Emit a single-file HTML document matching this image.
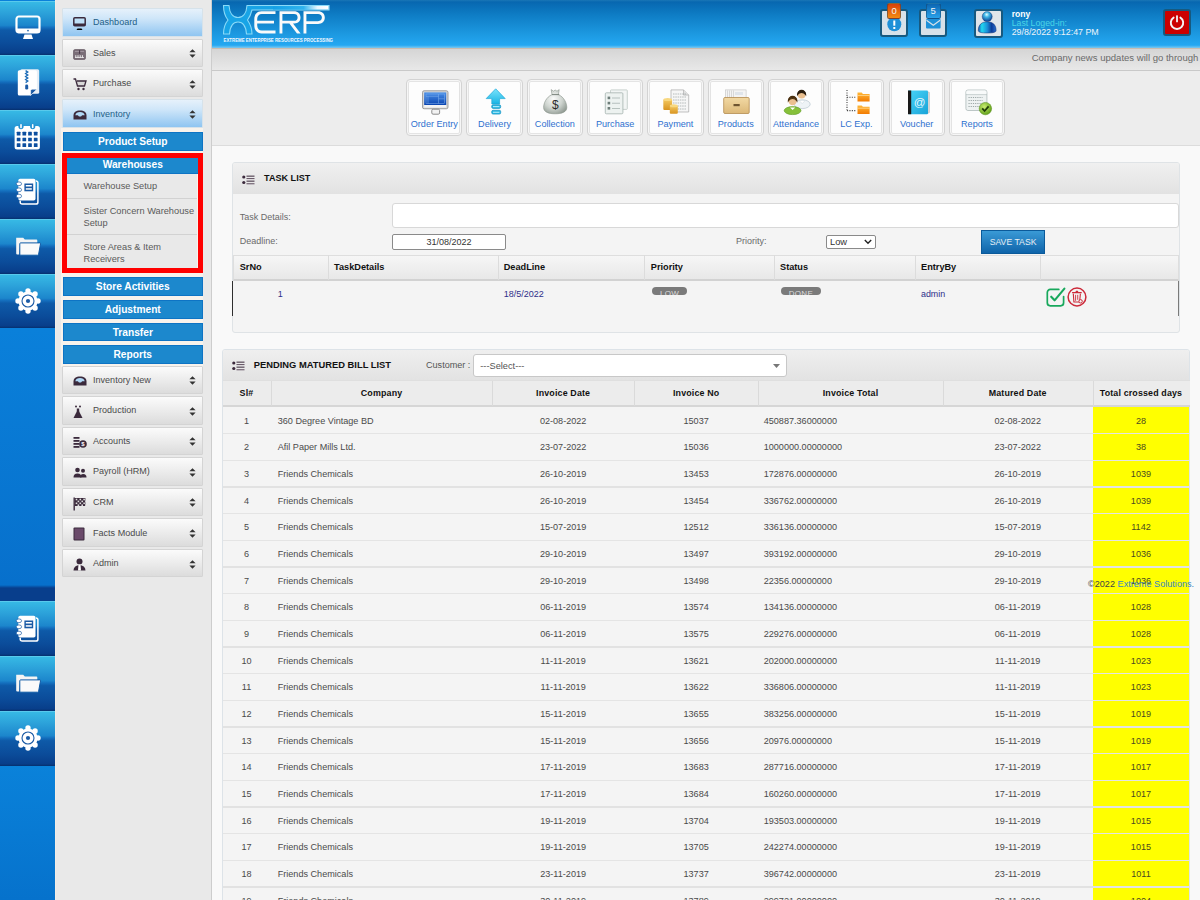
<!DOCTYPE html><html><head><meta charset="utf-8"><title>XERP</title><style>
*{box-sizing:border-box;margin:0;padding:0}
html,body{width:1200px;height:900px;overflow:hidden;background:#f9f9f9;font-family:"Liberation Sans",sans-serif;color:#555}
.a{position:absolute}
.a>svg{display:block}
.tile{position:absolute;left:0;width:55px;background:linear-gradient(to bottom,#6ad2f0 0,#36b8e4 1.5px,#2ca2da 22%,#1c86cc 45%,#146fbe 49%,#0e5aa8 54%,#0b4c9a 78%,#083e8a 96%,#06306e 100%)}
.tile svg{position:absolute}
.mi{position:absolute;left:62px;width:141px;height:28.5px;border:1px solid #d4d4d4;border-radius:1px;background:linear-gradient(to bottom,#fbfbfb 0,#f2f2f2 30%,#dcdcdc 100%);}
.mi.sel{background:linear-gradient(to bottom,#e6f1fb 0,#cfe6f9 35%,#8fc5f1 100%);border-color:#d6e2ea}
.mi .lb{position:absolute;left:30px;top:8.3px;font-size:9.05px;color:#4a4a4a;white-space:nowrap}
.mi.sel .lb{color:#1f5f88}
.mi .ic{position:absolute;left:10px;top:1.5px;height:26.5px;display:flex;align-items:center}
.mi .ar{position:absolute;left:126.3px;top:9.7px;display:block}
.mi .ar svg,.mi .ic svg{display:block}
.bb{position:absolute;left:62.5px;width:140.5px;height:18.7px;background:#1c88cd;border:1px solid #0e74c4;color:#fff;font-weight:bold;font-size:10.2px;text-align:center;line-height:17px;white-space:nowrap}
.sub{position:absolute;left:67px;width:130px;background:#e9e9e9;color:#5a5a5a;font-size:9.24px;line-height:12px;padding-left:16.5px;border-bottom:1px solid #d2d2d2}
.sc{position:absolute;top:79.3px;width:56.3px;height:57px;border:1.5px solid #d3d3d3;border-radius:4px;background:#fdfdfd;box-shadow:inset 0 0 0 1.2px #f6f6f6,inset 0 0 0 2px #dedede}
.sc .lbl{position:absolute;left:-3px;right:-3px;top:38.5px;text-align:center;color:#2d70cf;font-size:9.1px;white-space:nowrap}
.sc svg{position:absolute}
.th{position:absolute;font-weight:bold;color:#111;font-size:9.2px;white-space:nowrap}
.td{position:absolute;font-size:9.1px;color:#4a4a4a;white-space:nowrap;line-height:12px}
.tdc{text-align:center}
</style></head><body>
<div class="a" style="left:0;top:0;width:55px;height:900px;background:linear-gradient(to bottom,#0a80da 0,#0a80da 330px,#0770cc 585px,#083e8c 588px,#083e8c 601px,#0a82da 765px,#0672cc 900px)"></div>
<div class="tile" style="top:0.60px;height:54.6px"><svg width="26" height="26" viewBox="0 0 26 26" style="left:14.5px;top:14.5px"><rect x="1.5" y="1.5" width="23" height="16" rx="2.5" fill="none" stroke="#fff" stroke-width="2.2"/><rect x="1.5" y="13.5" width="23" height="4" fill="#fff"/><circle cx="13" cy="15.6" r="0.9" fill="#2a6aae"/><path d="M9.5 19.5h7l1.5 4.5h-10z" fill="#fff"/></svg></div>
<div class="tile" style="top:55.20px;height:54.6px"><svg width="24" height="28" viewBox="0 0 24 28" style="left:16.5px;top:13.5px"><rect x="3.2" y="0.2" width="19" height="24.6" rx="1.6" fill="#e6eef6"/><path d="M2.3 1.2H18.4A1.5 1.5 0 0 1 19.9 2.7V20.2L13.6 26.5H2.3A1.5 1.5 0 0 1 0.8 25V2.7A1.5 1.5 0 0 1 2.3 1.2Z" fill="#fff"/><path d="M13.6 26.5V21.7A1.5 1.5 0 0 1 15.1 20.2H19.9Z" fill="#1a5aa5" stroke="#fff" stroke-width="0.6"/><path d="M8.6 1.6l2.2 1.5-2.2 1.5 2.2 1.5-2.2 1.5 2.2 1.5-2.2 1.5 2.2 1.5-2.2 1.5" fill="none" stroke="#1b6cb8" stroke-width="1.3"/><rect x="8.2" y="15.6" width="3" height="5" rx="1.3" fill="#1b5aa5"/></svg></div>
<div class="tile" style="top:109.80px;height:54.6px"><svg width="27" height="27" viewBox="0 0 27 27" style="left:14px;top:14px"><rect x="0.6" y="2" width="25.3" height="23.5" rx="2.5" fill="#fff"/><circle cx="7" cy="2.6" r="2.6" fill="#2290d2"/><circle cx="18.7" cy="2.6" r="2.6" fill="#2290d2"/><rect x="6.2" y="0" width="1.6" height="4.2" rx="0.8" fill="#fff"/><rect x="17.9" y="0" width="1.6" height="4.2" rx="0.8" fill="#fff"/><rect x="2.75" y="7.85" width="3.7" height="3.7" rx="0.4" fill="#0d4fa0"/><rect x="8.45" y="7.85" width="3.7" height="3.7" rx="0.4" fill="#0d4fa0"/><rect x="14.15" y="7.85" width="3.7" height="3.7" rx="0.4" fill="#0d4fa0"/><rect x="19.85" y="7.85" width="3.7" height="3.7" rx="0.4" fill="#0d4fa0"/><rect x="2.75" y="13.65" width="3.7" height="3.7" rx="0.4" fill="#0d4fa0"/><rect x="8.45" y="13.65" width="3.7" height="3.7" rx="0.4" fill="#0d4fa0"/><rect x="14.15" y="13.65" width="3.7" height="3.7" rx="0.4" fill="#0d4fa0"/><rect x="19.85" y="13.65" width="3.7" height="3.7" rx="0.4" fill="#0d4fa0"/><rect x="2.75" y="19.35" width="3.7" height="3.7" rx="0.4" fill="#0d4fa0"/><rect x="8.45" y="19.35" width="3.7" height="3.7" rx="0.4" fill="#0d4fa0"/><rect x="14.15" y="19.35" width="3.7" height="3.7" rx="0.4" fill="#0d4fa0"/><rect x="19.85" y="19.35" width="3.7" height="3.7" rx="0.4" fill="#0d4fa0"/></svg></div>
<div class="tile" style="top:164.40px;height:54.6px"><svg width="26" height="28" viewBox="0 0 26 28" style="left:14.5px;top:13.8px"><path d="M5.2 22.8V24.2A1.9 1.9 0 0 0 7.1 26.1H21A1.9 1.9 0 0 0 22.9 24.2V4.8A1.9 1.9 0 0 0 21 2.9" fill="none" stroke="#fff" stroke-width="1.5"/><rect x="3.3" y="0.7" width="17.2" height="21.8" rx="1.8" fill="#fff"/><rect x="9.4" y="5.5" width="8.8" height="7.8" fill="#1a5aa5"/><rect x="10.8" y="7" width="6" height="1.5" fill="#fff"/><rect x="10.8" y="10.2" width="6" height="1.5" fill="#fff"/><g fill="#fff" stroke="#1a5aa5" stroke-width="0.7"><ellipse cx="3.9" cy="5.8" rx="2.7" ry="1.9"/><ellipse cx="3.9" cy="11.8" rx="2.7" ry="1.9"/><ellipse cx="3.9" cy="18.1" rx="2.7" ry="1.9"/></g></svg></div>
<div class="tile" style="top:219.00px;height:54.6px"><svg width="28" height="22" viewBox="0 0 28 22" style="left:14px;top:17px"><path d="M2.2 1.7H9.2L10.8 3.6H22.5A0.8 0.8 0 0 1 23.3 4.4V8H6L5.2 18.5H3.2A1 1 0 0 1 2.2 17.5Z" fill="#f4f4f4"/><path d="M6.6 6.9H25.8A0.8 0.8 0 0 1 26.5 7.9L24.6 18.3A1 1 0 0 1 23.6 19.2H6.7A0.9 0.9 0 0 1 5.8 18.3V7.7A0.8 0.8 0 0 1 6.6 6.9Z" fill="#fafafa" stroke="#0e5aa6" stroke-width="1"/></svg></div>
<div class="tile" style="top:273.60px;height:54.6px"><svg width="26" height="26" viewBox="0 0 26 26" style="left:15px;top:14px"><circle cx="23.00" cy="13.00" r="2.7" fill="#fff"/><circle cx="20.07" cy="20.07" r="2.7" fill="#fff"/><circle cx="13.00" cy="23.00" r="2.7" fill="#fff"/><circle cx="5.93" cy="20.07" r="2.7" fill="#fff"/><circle cx="3.00" cy="13.00" r="2.7" fill="#fff"/><circle cx="5.93" cy="5.93" r="2.7" fill="#fff"/><circle cx="13.00" cy="3.00" r="2.7" fill="#fff"/><circle cx="20.07" cy="5.93" r="2.7" fill="#fff"/><circle cx="13" cy="13" r="9.6" fill="#fff"/><circle cx="13" cy="13" r="6" fill="none" stroke="#1a5aa5" stroke-width="1.1"/><circle cx="13" cy="13" r="2.1" fill="#1a5aa5"/></svg></div>
<div class="tile" style="top:601.00px;height:54.6px"><svg width="26" height="28" viewBox="0 0 26 28" style="left:14.5px;top:13.8px"><path d="M5.2 22.8V24.2A1.9 1.9 0 0 0 7.1 26.1H21A1.9 1.9 0 0 0 22.9 24.2V4.8A1.9 1.9 0 0 0 21 2.9" fill="none" stroke="#fff" stroke-width="1.5"/><rect x="3.3" y="0.7" width="17.2" height="21.8" rx="1.8" fill="#fff"/><rect x="9.4" y="5.5" width="8.8" height="7.8" fill="#1a5aa5"/><rect x="10.8" y="7" width="6" height="1.5" fill="#fff"/><rect x="10.8" y="10.2" width="6" height="1.5" fill="#fff"/><g fill="#fff" stroke="#1a5aa5" stroke-width="0.7"><ellipse cx="3.9" cy="5.8" rx="2.7" ry="1.9"/><ellipse cx="3.9" cy="11.8" rx="2.7" ry="1.9"/><ellipse cx="3.9" cy="18.1" rx="2.7" ry="1.9"/></g></svg></div>
<div class="tile" style="top:656.00px;height:54.6px"><svg width="28" height="22" viewBox="0 0 28 22" style="left:14px;top:17px"><path d="M2.2 1.7H9.2L10.8 3.6H22.5A0.8 0.8 0 0 1 23.3 4.4V8H6L5.2 18.5H3.2A1 1 0 0 1 2.2 17.5Z" fill="#f4f4f4"/><path d="M6.6 6.9H25.8A0.8 0.8 0 0 1 26.5 7.9L24.6 18.3A1 1 0 0 1 23.6 19.2H6.7A0.9 0.9 0 0 1 5.8 18.3V7.7A0.8 0.8 0 0 1 6.6 6.9Z" fill="#fafafa" stroke="#0e5aa6" stroke-width="1"/></svg></div>
<div class="tile" style="top:711.00px;height:54.6px"><svg width="26" height="26" viewBox="0 0 26 26" style="left:15px;top:14px"><circle cx="23.00" cy="13.00" r="2.7" fill="#fff"/><circle cx="20.07" cy="20.07" r="2.7" fill="#fff"/><circle cx="13.00" cy="23.00" r="2.7" fill="#fff"/><circle cx="5.93" cy="20.07" r="2.7" fill="#fff"/><circle cx="3.00" cy="13.00" r="2.7" fill="#fff"/><circle cx="5.93" cy="5.93" r="2.7" fill="#fff"/><circle cx="13.00" cy="3.00" r="2.7" fill="#fff"/><circle cx="20.07" cy="5.93" r="2.7" fill="#fff"/><circle cx="13" cy="13" r="9.6" fill="#fff"/><circle cx="13" cy="13" r="6" fill="none" stroke="#1a5aa5" stroke-width="1.1"/><circle cx="13" cy="13" r="2.1" fill="#1a5aa5"/></svg></div>
<div class="a" style="left:55px;top:0;width:157px;height:900px;background:#e9e9e9;border-left:1.5px solid #f3ede6;border-right:1px solid #cdcdcd"></div>
<div class="a" style="left:61.3px;top:127.8px;width:142.2px;height:239px;background:#f8f3ec"></div>
<div class="mi sel" style="top:8.2px"><span class="ic"><svg width="13" height="13" viewBox="0 0 13 13"><rect x="0.8" y="0.8" width="11.4" height="8" rx="1" fill="#bfe0f8" stroke="#3b2a3c" stroke-width="1.5"/><rect x="0.8" y="6.5" width="11.4" height="2.2" fill="#3b2a3c"/><path d="M4.5 11.5h4l1 1.5h-6z" fill="#000"/></svg></span><span class="lb">Dashboard</span></div>
<div class="mi" style="top:38.5px"><span class="ic"><svg width="13" height="11" viewBox="0 0 13 11"><rect x="0.5" y="0.5" width="12" height="10" rx="1.6" fill="#7a6e78" stroke="#5a4e58" stroke-width="0.6"/><rect x="2" y="2.2" width="9" height="0.8" fill="#a89ca6"/><rect x="6.2" y="1.2" width="0.9" height="3.6" fill="#3b2a3c"/><rect x="2.3" y="6.2" width="1" height="2.6" fill="#eee"/><rect x="4.5" y="6.2" width="1" height="2.6" fill="#eee"/><rect x="6.7" y="6.2" width="1" height="2.6" fill="#eee"/><rect x="8.9" y="6.2" width="1" height="2.6" fill="#eee"/><rect x="2" y="8.1" width="9" height="0.8" fill="#eee"/></svg></span><span class="lb">Sales</span><span class="ar"><svg width="7" height="9" viewBox="0 0 7 9"><path d="M3.5 0.2L6.6 3.3H0.4z M3.5 8.7L6.6 5.6H0.4z" fill="#333"/></svg></span></div>
<div class="mi" style="top:68.9px"><span class="ic"><svg width="14" height="13" viewBox="0 0 14 13"><path d="M0.5 1h2l2 7h7l1.5-5H4" fill="#d8d8d8" stroke="#3b2a3c" stroke-width="1.3"/><circle cx="5.5" cy="11" r="1.2" fill="#3b2a3c"/><circle cx="10.5" cy="11" r="1.2" fill="#3b2a3c"/></svg></span><span class="lb">Purchase</span><span class="ar"><svg width="7" height="9" viewBox="0 0 7 9"><path d="M3.5 0.2L6.6 3.3H0.4z M3.5 8.7L6.6 5.6H0.4z" fill="#333"/></svg></span></div>
<div class="mi sel" style="top:99.4px"><span class="ic"><svg width="14" height="10" viewBox="0 0 14 10"><path d="M0.5 5.5C0.5 2 3 0.4 7 0.4S13.5 2 13.5 5.5V9.6H0.5z" fill="#3b2a3c"/><path d="M2.3 5.2C2.8 3 4.5 2.1 7 2.1S11.2 3 11.7 5.2H9.2L8 6.6H6L4.8 5.2z" fill="#b0d8f6"/></svg></span><span class="lb">Inventory</span><span class="ar"><svg width="7" height="9" viewBox="0 0 7 9"><path d="M3.5 0.2L6.6 3.3H0.4z M3.5 8.7L6.6 5.6H0.4z" fill="#333"/></svg></span></div>
<div class="bb" style="top:132px">Product Setup</div>
<div class="bb" style="top:155px">Warehouses</div>
<div class="sub" style="top:174px;height:24.5px;padding-top:6px">Warehouse Setup</div>
<div class="sub" style="top:198.5px;height:36px;padding-top:6.5px">Sister Concern Warehouse<br>Setup</div>
<div class="sub" style="top:234.5px;height:34px;padding-top:6.5px;border-bottom:none">Store Areas &amp; Item<br>Receivers</div>
<div class="a" style="left:62px;top:153px;width:140.5px;height:120px;border:5.2px solid #ff0000"></div>
<div class="bb" style="top:277.0px">Store Activities</div>
<div class="bb" style="top:300.0px">Adjustment</div>
<div class="bb" style="top:322.7px">Transfer</div>
<div class="bb" style="top:345.0px">Reports</div>
<div class="mi" style="top:365.6px"><span class="ic"><svg width="14" height="10" viewBox="0 0 14 10"><path d="M0.5 5.5C0.5 2 3 0.4 7 0.4S13.5 2 13.5 5.5V9.6H0.5z" fill="#3b2a3c"/><path d="M2.3 5.2C2.8 3 4.5 2.1 7 2.1S11.2 3 11.7 5.2H9.2L8 6.6H6L4.8 5.2z" fill="#b0d8f6"/></svg></span><span class="lb">Inventory New</span><span class="ar"><svg width="7" height="9" viewBox="0 0 7 9"><path d="M3.5 0.2L6.6 3.3H0.4z M3.5 8.7L6.6 5.6H0.4z" fill="#333"/></svg></span></div>
<div class="mi" style="top:396.2px"><span class="ic"><svg width="10" height="14" viewBox="0 0 10 14"><circle cx="3" cy="1.5" r="1" fill="#3b2a3c"/><circle cx="7" cy="1.5" r="1" fill="#3b2a3c"/><rect x="3.8" y="3.5" width="2.4" height="4" fill="#3b2a3c"/><path d="M3.8 6.5L0.5 13h9L6.2 6.5z" fill="#3b2a3c"/></svg></span><span class="lb">Production</span><span class="ar"><svg width="7" height="9" viewBox="0 0 7 9"><path d="M3.5 0.2L6.6 3.3H0.4z M3.5 8.7L6.6 5.6H0.4z" fill="#333"/></svg></span></div>
<div class="mi" style="top:426.7px"><span class="ic"><svg width="14" height="13" viewBox="0 0 14 13"><rect x="0.5" y="1" width="6" height="1.8" fill="#3b2a3c"/><rect x="0.5" y="4" width="6" height="1.8" fill="#3b2a3c"/><rect x="0.5" y="7" width="6" height="1.8" fill="#3b2a3c"/><rect x="0.5" y="10" width="6" height="1.8" fill="#3b2a3c"/><circle cx="10" cy="8" r="3.8" fill="#3b2a3c"/><text x="10" y="10.2" font-size="6" fill="#fff" text-anchor="middle" font-family="Liberation Sans" font-weight="bold">$</text></svg></span><span class="lb">Accounts</span><span class="ar"><svg width="7" height="9" viewBox="0 0 7 9"><path d="M3.5 0.2L6.6 3.3H0.4z M3.5 8.7L6.6 5.6H0.4z" fill="#333"/></svg></span></div>
<div class="mi" style="top:457.2px"><span class="ic"><svg width="14" height="11" viewBox="0 0 14 11"><circle cx="4.5" cy="3" r="2.3" fill="#3b2a3c"/><path d="M0.5 10.5a4 4 0 0 1 8 0z" fill="#3b2a3c"/><circle cx="10" cy="3.8" r="2" fill="#3b2a3c"/><path d="M7 10.5a3.2 3.5 0 0 1 6.5 0z" fill="#3b2a3c"/></svg></span><span class="lb">Payroll (HRM)</span><span class="ar"><svg width="7" height="9" viewBox="0 0 7 9"><path d="M3.5 0.2L6.6 3.3H0.4z M3.5 8.7L6.6 5.6H0.4z" fill="#333"/></svg></span></div>
<div class="mi" style="top:487.8px"><span class="ic"><svg width="13" height="14" viewBox="0 0 13 14"><rect x="0.5" y="0.5" width="1.4" height="13" fill="#3b2a3c"/><path d="M1.9 1h10.5v8H1.9z" fill="#3b2a3c"/><rect x="2.7" y="1.7" width="1.6" height="1.6" fill="#ddd"/><rect x="6.5" y="1.7" width="1.6" height="1.6" fill="#ddd"/><rect x="10.3" y="1.7" width="1.6" height="1.6" fill="#ddd"/><rect x="4.6" y="3.6" width="1.6" height="1.6" fill="#ddd"/><rect x="8.4" y="3.6" width="1.6" height="1.6" fill="#ddd"/><rect x="12.2" y="3.6" width="1.6" height="1.6" fill="#ddd"/><rect x="2.7" y="5.5" width="1.6" height="1.6" fill="#ddd"/><rect x="6.5" y="5.5" width="1.6" height="1.6" fill="#ddd"/><rect x="10.3" y="5.5" width="1.6" height="1.6" fill="#ddd"/><rect x="4.6" y="7.4" width="1.6" height="1.6" fill="#ddd"/><rect x="8.4" y="7.4" width="1.6" height="1.6" fill="#ddd"/><rect x="12.2" y="7.4" width="1.6" height="1.6" fill="#ddd"/></svg></span><span class="lb">CRM</span><span class="ar"><svg width="7" height="9" viewBox="0 0 7 9"><path d="M3.5 0.2L6.6 3.3H0.4z M3.5 8.7L6.6 5.6H0.4z" fill="#333"/></svg></span></div>
<div class="mi" style="top:518.4px"><span class="ic"><svg width="12" height="14" viewBox="0 0 12 14"><rect x="0.5" y="0.5" width="11" height="13" rx="1" fill="#3b2a3c"/><rect x="1.5" y="1.5" width="9" height="11" fill="#6a4a6a"/></svg></span><span class="lb">Facts Module</span><span class="ar"><svg width="7" height="9" viewBox="0 0 7 9"><path d="M3.5 0.2L6.6 3.3H0.4z M3.5 8.7L6.6 5.6H0.4z" fill="#333"/></svg></span></div>
<div class="mi" style="top:548.9px"><span class="ic"><svg width="13" height="13" viewBox="0 0 13 13"><circle cx="6.5" cy="3.5" r="3" fill="#3b2a3c"/><path d="M0.5 12.5a6 5.5 0 0 1 12 0z" fill="#3b2a3c"/><path d="M5.5 6.5h2l0.5 6h-3z" fill="#fff"/></svg></span><span class="lb">Admin</span><span class="ar"><svg width="7" height="9" viewBox="0 0 7 9"><path d="M3.5 0.2L6.6 3.3H0.4z M3.5 8.7L6.6 5.6H0.4z" fill="#333"/></svg></span></div>
<div class="a" style="left:212px;top:0;width:988px;height:48px;background:linear-gradient(to bottom,#1a76b6 0,#0767b0 2px,#0e7cc4 30%,#1c98e0 70%,#24a8f2 94%,#7cc8f0 100%)"></div>
<div class="a" style="left:212px;top:48px;width:988px;height:1px;background:#c9bcb0"></div>
<svg class="a" style="left:218px;top:0px" width="120" height="45" viewBox="0 0 120 45">
<defs><linearGradient id="sw" x1="0" x2="1"><stop offset="0" stop-color="#14a0e6"/><stop offset="0.55" stop-color="#30b4ee"/><stop offset="0.8" stop-color="#e8f6fe"/><stop offset="1" stop-color="#ffffff"/></linearGradient></defs>
<path d="M5.5 5.5H11C11.5 13 15 17.5 20 17.5C25 17.5 28.5 13 29 5.5H111V10H34C33 14 31.5 17.5 29.5 20C31.5 23 34 28 34 34H28.5C28 27 25 22 20 22C15 22 12 27 11.5 34H5.5C5.5 28 7.5 23 10 20C7.5 17 5.5 12 5.5 5.5Z" fill="#18a4e6" stroke="#8adaf8" stroke-width="1.1"/>
<rect x="55" y="6" width="55.5" height="3.5" fill="url(#sw)"/>
<path d="M57.5 11.2H43.5C39 11.2 36.3 14.5 36.3 19V25.6C36.3 30 39 33.4 43.5 33.4H57.5V30.6H43.8C41 30.6 39.2 28.6 39.2 25.6V23.6H56V20.8H39.2V19C39.2 16 41 14 43.8 14H57.5Z" fill="#fafafa"/>
<path fill-rule="evenodd" d="M61.5 11.2H76C80 11.2 82.5 13.6 82.5 17.5C82.5 21 80.2 23.4 76.5 23.5H75L82.6 33.4H79L71.4 23.5H64.4V33.4H61.5ZM64.4 14V20.8H76C78.4 20.8 79.6 19.6 79.6 17.4C79.6 15.2 78.4 14 76 14Z" fill="#fafafa"/>
<path fill-rule="evenodd" d="M85.5 11.2H100C104 11.2 106.8 13.6 106.8 17.6C106.8 21.6 104 24 100 24H88.4V33.4H85.5ZM88.4 14V21.2H100C102.4 21.2 103.9 19.9 103.9 17.6C103.9 15.3 102.4 14 100 14Z" fill="#fafafa"/>
<text x="5.5" y="41.8" font-size="4.6" font-weight="bold" fill="#f0f8ff" font-family="Liberation Sans" textLength="109.5" lengthAdjust="spacingAndGlyphs">EXTREME ENTERPRISE RESOURCES PROCESSING</text>
</svg>
<div class="a" style="left:879.9px;top:8.8px;width:28px;height:28px;border:2.2px solid #17597f;border-radius:3px;background:#d7e1e9"><svg style="position:absolute;left:5.5px;top:6px" width="15" height="15" viewBox="0 0 15 15"><circle cx="7.3" cy="7.2" r="7" fill="#1e90d8"/><rect x="6.3" y="3.5" width="2" height="5.2" fill="#fff"/><rect x="6.3" y="10" width="2" height="2" fill="#fff"/></svg></div><div class="a" style="left:886.9px;top:2.9px;width:14.5px;height:15.8px;border-radius:2.5px;background:linear-gradient(#d8400a,#f48c12);color:#f4f4f4;font-size:9.5px;text-align:center;line-height:14.5px;border:1px solid rgba(20,60,90,0.45)">0</div>
<div class="a" style="left:919.0px;top:8.8px;width:28px;height:28px;border:2.2px solid #17597f;border-radius:3px;background:#d7e1e9"><svg style="position:absolute;left:4.8px;top:8.3px" width="15" height="10" viewBox="0 0 15 10"><rect x="0" y="0" width="14.6" height="9.4" rx="1" fill="#1e90d8"/><path d="M0.5 1.2l6.8 5 6.8-5" fill="none" stroke="#d7e1e9" stroke-width="1.2"/></svg></div><div class="a" style="left:926.0px;top:2.9px;width:14.5px;height:15.8px;border-radius:2.5px;background:linear-gradient(#0c66b2,#2aa2ea);color:#f4f4f4;font-size:9.5px;text-align:center;line-height:14.5px;border:1px solid rgba(20,60,90,0.45)">5</div>
<div class="a" style="left:973.9px;top:9.3px;width:29px;height:28.6px;border:2.2px solid #17597f;border-radius:3px;background:#dfe5ea"><svg style="position:absolute;left:1.5px;top:0px" width="21" height="23" viewBox="0 0 21 23"><defs><radialGradient id="ph" cx="0.45" cy="0.3" r="0.7"><stop offset="0" stop-color="#e0fbff"/><stop offset="0.35" stop-color="#40b8e8"/><stop offset="1" stop-color="#0a3c90"/></radialGradient><linearGradient id="pb" x1="0" x2="1" y1="0" y2="0"><stop offset="0" stop-color="#1a50b0"/><stop offset="0.2" stop-color="#20d8f0"/><stop offset="0.5" stop-color="#1a90d8"/><stop offset="0.75" stop-color="#0a3a98"/><stop offset="1" stop-color="#2a70d0"/></linearGradient></defs><path d="M1.3 19.5C1.3 13.5 5 10.8 10.2 10.8S19.1 13.5 19.1 19.5C19.1 21.3 16 22 10.2 22S1.3 21.3 1.3 19.5Z" fill="url(#pb)" stroke="#0a2a70" stroke-width="0.5"/><circle cx="10.2" cy="5.6" r="5" fill="url(#ph)" stroke="#0a3070" stroke-width="0.4"/></svg></div>
<div class="a" style="left:1011.7px;top:8.5px;color:#fff;font-weight:bold;font-size:8.6px">rony</div>
<div class="a" style="left:1011.7px;top:18px;color:#4ad6e6;font-size:8.74px;white-space:nowrap">Last Loged-in:</div>
<div class="a" style="left:1011.7px;top:26.8px;color:#eef4fa;font-size:8.85px;white-space:nowrap">29/8/2022 9:12:47 PM</div>
<div class="a" style="left:1163px;top:9.2px;width:27.5px;height:27px;border:2.2px solid #17597f;border-right-width:2.6px;border-bottom-width:2.6px;border-radius:3px;background:#cc0000"><svg style="position:absolute;left:0;top:0" width="23" height="23" viewBox="0 0 23 23"><path d="M8.6 6.6A6.2 6.2 0 1 0 15.4 6.6" fill="none" stroke="#f4f4f4" stroke-width="1.9" stroke-linecap="round"/><rect x="11.1" y="4.3" width="1.8" height="7" rx="0.6" fill="#f4f4f4"/></svg></div>
<div class="a" style="left:212px;top:49px;width:988px;height:21px;background:linear-gradient(to bottom,#d5d5d5,#e8e8e8)"></div>
<div class="a" style="left:212px;top:70px;width:988px;height:1px;background:#c9c9c9"></div>
<div class="a" style="left:1031.7px;top:51.5px;color:#6a6a6a;font-size:9.55px;white-space:nowrap">Company news updates will go through</div>
<div class="a" style="left:212px;top:71px;width:988px;height:74.5px;background:#ededed;border-bottom:1px solid #dcdcdc"></div>
<div class="sc" style="left:406.1px"><svg width="30" height="27" viewBox="0 0 30 27" style="left:13.5px;top:8.7px;overflow:visible"><defs><linearGradient id="g0" x1="0" x2="0" y1="0" y2="1"><stop offset="0" stop-color="#4a90e8"/><stop offset="1" stop-color="#0a44b0"/></linearGradient></defs><rect x="1.5" y="1.75" width="25.5" height="18" rx="1.6" fill="#d6d6d6" stroke="#8e8e8e" stroke-width="0.8"/><rect x="3.2" y="3.4" width="22" height="12.6" fill="url(#g0)"/><rect x="3.2" y="16" width="22" height="2.6" fill="#f4f4f4"/><g fill="none" stroke="#8ab8f0" stroke-width="0.6" opacity="0.8"><rect x="5" y="5" width="18.5" height="9.5"/><path d="M17.5 5v9.5M5 7.3h12.5M7 7.3v7.2M17.5 9.8h6"/></g><rect x="10.8" y="20.2" width="7.8" height="5" rx="1.3" fill="#f2f2f2" stroke="#8a8a8a" stroke-width="1"/></svg><div class="lbl">Order Entry</div></div>
<div class="sc" style="left:466.4px"><svg width="30" height="27" viewBox="0 0 30 27" style="left:13.5px;top:8.7px;overflow:visible"><defs><linearGradient id="g1" x1="0" x2="0" y1="0" y2="1"><stop offset="0" stop-color="#7ae4fc"/><stop offset="1" stop-color="#18b4e4"/></linearGradient></defs><path d="M14.7 -0.2L24.2 9.6h-5.6v5.4h-7.8V9.6H5.2z" fill="url(#g1)" stroke="#20a8d8" stroke-width="0.7"/><rect x="10.7" y="15.8" width="9" height="3.6" rx="1.4" fill="#2ab8e2" stroke="#1894c4" stroke-width="0.7"/><rect x="10.7" y="21.3" width="9" height="3.8" rx="1.4" fill="#2ab8e2" stroke="#1894c4" stroke-width="0.7"/><rect x="12" y="17.2" width="6.4" height="0.9" fill="#c8f4ff"/><rect x="12" y="22.8" width="6.4" height="0.9" fill="#c8f4ff"/></svg><div class="lbl">Delivery</div></div>
<div class="sc" style="left:526.7px"><svg width="30" height="27" viewBox="0 0 30 27" style="left:13.5px;top:8.7px;overflow:visible"><defs><radialGradient id="g2" cx="0.42" cy="0.38" r="0.72"><stop offset="0" stop-color="#fafbfa"/><stop offset="0.55" stop-color="#cdd3ce"/><stop offset="1" stop-color="#8c968e"/></radialGradient></defs><path d="M10.2 0.6l2.2 1.6 1.8-1.2 1.8 1.2 2.2-1.6-0.8 5c6 2.6 8.4 9 8.4 12.8 0 4.8-5.4 6.4-11.6 6.4S2.6 23.2 2.6 18.4c0-3.8 2.4-10.2 8.4-12.8z" fill="url(#g2)" stroke="#8a948c" stroke-width="0.6"/><path d="M11 5.6h7.2" stroke="#7a847c" stroke-width="1"/><text x="14.3" y="20" font-size="12" font-family="Liberation Sans" fill="#2a2a2a" text-anchor="middle">$</text></svg><div class="lbl">Collection</div></div>
<div class="sc" style="left:587.0px"><svg width="30" height="27" viewBox="0 0 30 27" style="left:13.5px;top:8.7px;overflow:visible"><rect x="8.5" y="0.9" width="16.8" height="19.5" rx="0.8" fill="#f2f5f4" stroke="#b4c0bc" stroke-width="0.7"/><rect x="3.3" y="3.8" width="17.6" height="21" rx="1" fill="#edf2f0" stroke="#a4b2ae" stroke-width="0.8"/><rect x="5.6" y="7.6" width="2.6" height="2.6" fill="#6e7e7a"/><rect x="5.6" y="12.8" width="2.6" height="2.6" fill="#6e7e7a"/><rect x="5.6" y="18" width="2.6" height="2.6" fill="#6e7e7a"/><rect x="10" y="8.6" width="8" height="0.8" fill="#a8b4b2"/><rect x="10" y="13.8" width="8" height="0.8" fill="#a8b4b2"/><rect x="10" y="19" width="8" height="0.8" fill="#a8b4b2"/></svg><div class="lbl">Purchase</div></div>
<div class="sc" style="left:647.3px"><svg width="30" height="27" viewBox="0 0 30 27" style="left:13.5px;top:8.7px;overflow:visible"><path d="M9 0.9h12.5l5.2 5.2V23H9z" fill="#f6f6f6" stroke="#a8a8a8" stroke-width="0.7"/><path d="M21.5 0.9v5.2h5.2" fill="#e0e0e0" stroke="#a8a8a8" stroke-width="0.6"/><path d="M11 5.0h13.5" stroke="#98a0a0" stroke-width="0.7" stroke-dasharray="1.5 0.8"/><path d="M11 8.0h13.5" stroke="#98a0a0" stroke-width="0.7" stroke-dasharray="1.5 0.8"/><path d="M11 11.0h13.5" stroke="#98a0a0" stroke-width="0.7" stroke-dasharray="1.5 0.8"/><path d="M11 14.0h13.5" stroke="#98a0a0" stroke-width="0.7" stroke-dasharray="1.5 0.8"/><path d="M11 17.0h13.5" stroke="#98a0a0" stroke-width="0.7" stroke-dasharray="1.5 0.8"/><path d="M11 20.0h13.5" stroke="#98a0a0" stroke-width="0.7" stroke-dasharray="1.5 0.8"/><defs><linearGradient id="g4" x1="0" x2="0" y1="0" y2="1"><stop offset="0" stop-color="#f4c860"/><stop offset="1" stop-color="#d89420"/></linearGradient></defs><rect x="1.3" y="10.5" width="8.8" height="10.5" rx="1" fill="url(#g4)"/><ellipse cx="5.7" cy="10.5" rx="4.4" ry="1.6" fill="#f8d880"/><rect x="7.8" y="16.8" width="8" height="8" rx="1" fill="url(#g4)"/><ellipse cx="11.8" cy="16.8" rx="4" ry="1.5" fill="#f8d880"/></svg><div class="lbl">Payment</div></div>
<div class="sc" style="left:707.6px"><svg width="30" height="27" viewBox="0 0 30 27" style="left:13.5px;top:8.7px;overflow:visible"><rect x="3.6" y="0.9" width="20.5" height="9" fill="#f4f4f4" stroke="#c0c0c0" stroke-width="0.6"/><path d="M5.5 1.5v8M7.5 1.5v8M9.5 1.5v8M11.5 1.5v8" stroke="#c4c4c4" stroke-width="0.6"/><rect x="13" y="3" width="8" height="3" fill="#dfe4ea"/><defs><linearGradient id="g5" x1="0" x2="0" y1="0" y2="1"><stop offset="0" stop-color="#f2d9a4"/><stop offset="1" stop-color="#dcb878"/></linearGradient></defs><rect x="1.7" y="8.5" width="25.5" height="16" rx="1.2" fill="url(#g5)" stroke="#b48c50" stroke-width="0.8"/><rect x="11.5" y="15" width="6.2" height="2.2" fill="#6e5430"/></svg><div class="lbl">Products</div></div>
<div class="sc" style="left:767.9px"><svg width="30" height="27" viewBox="0 0 30 27" style="left:13.5px;top:8.7px;overflow:visible"><ellipse cx="20.2" cy="15.2" rx="8" ry="4.4" fill="#eef3f6" stroke="#b8c6ce" stroke-width="0.7"/><path d="M17.5 12l2.7 2.5 2.7-2.5" fill="#fff" stroke="#c8d4da" stroke-width="0.5"/><circle cx="19.6" cy="5.6" r="4" fill="#eac090"/><path d="M15.6 5.4a4 4 0 0 1 8 0c-1-1.4-2.4-2-4-2s-3 .6-4 2z" fill="#2a1e10" stroke="#2a1e10" stroke-width="1.2"/><ellipse cx="10.6" cy="21.6" rx="8.4" ry="4" fill="#86c03a" stroke="#5e9a22" stroke-width="0.6"/><path d="M8 18.5l2.6 2.4 2.6-2.4" fill="#fff"/><circle cx="10.6" cy="12" r="4.2" fill="#eac090"/><path d="M6.4 11.6a4.2 4.2 0 0 1 8.4 0c-1-1.5-2.5-2.1-4.2-2.1s-3.2.6-4.2 2.1z" fill="#4a3010" stroke="#4a3010" stroke-width="1.2"/></svg><div class="lbl">Attendance</div></div>
<div class="sc" style="left:828.2px"><svg width="30" height="27" viewBox="0 0 30 27" style="left:13.5px;top:8.7px;overflow:visible"><path d="M4 1v21M4 8.2h9M4 21.6h9" fill="none" stroke="#444" stroke-width="1.1" stroke-dasharray="1.1 1.3"/><defs><linearGradient id="g7" x1="0" x2="0" y1="0" y2="1"><stop offset="0" stop-color="#ffb838"/><stop offset="1" stop-color="#f27a00"/></linearGradient></defs><path d="M14.5 3.6h4.2l1.2 1.4h6.7v7.6H14.5z" fill="url(#g7)"/><path d="M14.5 16.4h4.2l1.2 1.4h6.7v7.3H14.5z" fill="url(#g7)"/><rect x="14.5" y="6" width="12.1" height="0.7" fill="#ffe0a0"/><rect x="14.5" y="18.8" width="12.1" height="0.7" fill="#ffe0a0"/></svg><div class="lbl">LC Exp.</div></div>
<div class="sc" style="left:888.5px"><svg width="30" height="27" viewBox="0 0 30 27" style="left:13.5px;top:8.7px;overflow:visible"><defs><linearGradient id="g8" x1="0" x2="1" y1="0" y2="1"><stop offset="0" stop-color="#48d4f8"/><stop offset="1" stop-color="#1aa4d8"/></linearGradient></defs><rect x="24" y="3" width="2.4" height="21" rx="0.8" fill="#d8d8d8" stroke="#a0a0a0" stroke-width="0.4"/><rect x="5" y="1.5" width="20" height="23.7" rx="1" fill="url(#g8)"/><rect x="5" y="1.5" width="3.2" height="23.7" fill="#1a1a1a"/><text x="16.6" y="17.3" font-size="11.5" font-family="Liberation Sans" fill="#e6f8ff" text-anchor="middle">@</text></svg><div class="lbl">Voucher</div></div>
<div class="sc" style="left:948.8px"><svg width="30" height="27" viewBox="0 0 30 27" style="left:13.5px;top:8.7px;overflow:visible"><rect x="2.9" y="1" width="21" height="20.5" rx="2" fill="#eef2f2" stroke="#aebaba" stroke-width="0.8"/><rect x="3.3" y="1.4" width="20.2" height="4" rx="1.5" fill="#f8fafa"/><path d="M2.9 5.6h21" stroke="#aebaba" stroke-width="0.6"/><path d="M5.5 8.5h14" stroke="#7a8888" stroke-width="0.7" stroke-dasharray="1.2 1"/><path d="M5.5 11.5h14" stroke="#7a8888" stroke-width="0.7" stroke-dasharray="1.2 1"/><path d="M5.5 14.5h14" stroke="#7a8888" stroke-width="0.7" stroke-dasharray="1.2 1"/><path d="M5.5 17.5h14" stroke="#7a8888" stroke-width="0.7" stroke-dasharray="1.2 1"/><defs><radialGradient id="g9" cx="0.4" cy="0.35" r="0.7"><stop offset="0" stop-color="#c8ec70"/><stop offset="1" stop-color="#5c9c14"/></radialGradient></defs><circle cx="22.4" cy="19.6" r="6.2" fill="url(#g9)" stroke="#4e8a10" stroke-width="0.5"/><path d="M19.2 19.4l2.4 2.6 4-4.6" fill="none" stroke="#203c08" stroke-width="1.8"/></svg><div class="lbl">Reports</div></div>
<div class="a" style="left:231.5px;top:162px;width:948.5px;height:170.5px;border:1px solid #dfe3e6;border-radius:3px;background:#f4f4f4;overflow:hidden"><div class="a" style="left:0;top:0;width:100%;height:31px;background:linear-gradient(to bottom,#f0f0f0,#e2e2e2)"></div></div>
<div class="a" style="left:242px;top:175px"><svg width="13" height="10" viewBox="0 0 13 10"><circle cx="1.8" cy="2" r="1.6" fill="#3b2a3c"/><circle cx="1.8" cy="7.5" r="1.6" fill="#3b2a3c"/><rect x="4.5" y="0.6" width="8" height="1.1" fill="#4a3a4a"/><rect x="4.5" y="3" width="8" height="1.1" fill="#6a5a6a"/><rect x="4.5" y="5.6" width="8" height="1.1" fill="#4a3a4a"/><rect x="4.5" y="8.2" width="8" height="1.1" fill="#6a5a6a"/></svg></div>
<div class="a" style="left:264px;top:172.5px;font-weight:bold;font-size:9.1px;color:#111">TASK LIST</div>
<div class="a" style="left:239.7px;top:211.5px;font-size:9px;color:#6a6a6a">Task Details:</div>
<div class="a" style="left:391.7px;top:202.8px;width:787px;height:25.5px;background:#fff;border:1px solid #d8d8d8;border-radius:3px"></div>
<div class="a" style="left:239.7px;top:236.3px;font-size:9px;color:#6a6a6a">Deadline:</div>
<div class="a" style="left:391.7px;top:233.5px;width:114.5px;height:16px;background:#fff;border:1px solid #8a8a8a;border-radius:2px;font-size:9px;color:#333;text-align:center;line-height:14px">31/08/2022</div>
<div class="a" style="left:736px;top:236.3px;font-size:9px;color:#6a6a6a">Priority:</div>
<div class="a" style="left:826px;top:235px;width:50px;height:13.5px;background:#fff;border:1px solid #8a8a8a;border-radius:2px;font-size:9.3px;color:#333;line-height:12.8px;padding-left:3px">Low<svg style="position:absolute;right:3px;top:3px" width="8" height="6" viewBox="0 0 8 6"><path d="M0.8 1l3.2 3.2L7.2 1" fill="none" stroke="#222" stroke-width="1.4"/></svg></div>
<div class="a" style="left:981.2px;top:230px;width:63.8px;height:23.8px;background:linear-gradient(to bottom,#3a9ad6,#0f64aa);border:1px solid #0b5a9a;color:#e6eef4;font-size:8.7px;text-align:center;line-height:23px">SAVE TASK</div>
<div class="a" style="left:232.5px;top:254.5px;width:946px;height:26px;background:linear-gradient(to bottom,#f6f6f6,#e8e8e8);border:1px solid #dedede;border-bottom:2px solid #d2d2d2"></div>
<div class="a" style="left:327.50px;top:255px;width:1px;height:25px;background:#dcdcdc"></div>
<div class="a" style="left:497.50px;top:255px;width:1px;height:25px;background:#dcdcdc"></div>
<div class="a" style="left:643.75px;top:255px;width:1px;height:25px;background:#dcdcdc"></div>
<div class="a" style="left:773.75px;top:255px;width:1px;height:25px;background:#dcdcdc"></div>
<div class="a" style="left:914.50px;top:255px;width:1px;height:25px;background:#dcdcdc"></div>
<div class="a" style="left:1040.00px;top:255px;width:1px;height:25px;background:#dcdcdc"></div>
<div class="th" style="left:239.7px;top:261.5px">SrNo</div>
<div class="th" style="left:334.0px;top:261.5px">TaskDetails</div>
<div class="th" style="left:503.7px;top:261.5px">DeadLine</div>
<div class="th" style="left:650.8px;top:261.5px">Priority</div>
<div class="th" style="left:780.0px;top:261.5px">Status</div>
<div class="th" style="left:921.0px;top:261.5px">EntryBy</div>
<div class="a" style="left:231.9px;top:281px;width:1.3px;height:34.6px;background:#2e2e2e"></div>
<div class="a" style="left:1178.2px;top:281px;width:1.3px;height:34.6px;background:#7a7a7a"></div>
<div class="a" style="left:277.8px;top:288.5px;font-size:9px;color:#2f2f8a">1</div>
<div class="a" style="left:503.7px;top:288.5px;font-size:9px;color:#2f2f8a">18/5/2022</div>
<div class="a" style="left:921px;top:288.5px;font-size:8.9px;color:#2f2f8a">admin</div>
<div class="a" style="left:652px;top:287px;width:35px;height:8px;border-radius:4px;background:#7a7a7a;overflow:hidden;font-size:8px;color:#ddd;text-align:center;line-height:14px;letter-spacing:0.3px">LOW</div>
<div class="a" style="left:781px;top:287px;width:39.8px;height:8px;border-radius:4px;background:#7a7a7a;overflow:hidden;font-size:8px;color:#ddd;text-align:center;line-height:14px;letter-spacing:0.3px">DONE</div>
<svg class="a" style="left:1046px;top:287px" width="20" height="20" viewBox="0 0 20 20"><path d="M12.8 2.4H4.3A3 3 0 0 0 1.3 5.4V15.8A3 3 0 0 0 4.3 18.8H14.6A3 3 0 0 0 17.6 15.8V9.6" fill="none" stroke="#18a85c" stroke-width="1.7" stroke-linecap="round"/><path d="M5.2 9.7L8.6 13.3L18.4 1.6" fill="none" stroke="#18a85c" stroke-width="2.1" stroke-linecap="round" stroke-linejoin="round"/></svg>
<svg class="a" style="left:1067px;top:287px" width="20" height="20" viewBox="0 0 20 20"><circle cx="10" cy="10" r="8.9" fill="none" stroke="#cc2a3a" stroke-width="1.5"/><rect x="5" y="4.9" width="9.8" height="1.3" rx="0.5" fill="#cc2a3a"/><rect x="8.6" y="3.7" width="2.6" height="1.4" rx="0.6" fill="#cc2a3a"/><path d="M6.3 6.6L6.9 15H12.6L13.4 6.6" fill="none" stroke="#cc2a3a" stroke-width="1.1"/><rect x="8.2" y="7.8" width="0.9" height="6" fill="#cc2a3a"/><rect x="10.3" y="7.8" width="0.9" height="5" fill="#cc2a3a"/><circle cx="13.6" cy="14.3" r="1.7" fill="#f4f4f4" stroke="#cc2a3a" stroke-width="1"/></svg>
<div class="a" style="left:221.7px;top:349px;width:968px;height:560px;border:1px solid #dde3e8;border-radius:3px;background:#f4f4f4;overflow:hidden"><div class="a" style="left:0;top:0;width:100%;height:31px;background:linear-gradient(to bottom,#efefef,#e2e2e2)"></div></div>
<div class="a" style="left:231.7px;top:360.6px"><svg width="13" height="10" viewBox="0 0 13 10"><circle cx="1.8" cy="2" r="1.6" fill="#3b2a3c"/><circle cx="1.8" cy="7.5" r="1.6" fill="#3b2a3c"/><rect x="4.5" y="0.6" width="8" height="1.1" fill="#4a3a4a"/><rect x="4.5" y="3" width="8" height="1.1" fill="#6a5a6a"/><rect x="4.5" y="5.6" width="8" height="1.1" fill="#4a3a4a"/><rect x="4.5" y="8.2" width="8" height="1.1" fill="#6a5a6a"/></svg></div>
<div class="a" style="left:253.8px;top:359.5px;font-weight:bold;font-size:9.36px;color:#111;white-space:nowrap">PENDING MATURED BILL LIST</div>
<div class="a" style="left:426px;top:359.5px;font-size:9.08px;color:#555;white-space:nowrap">Customer :</div>
<div class="a" style="left:473.3px;top:354.3px;width:313.4px;height:22.4px;background:#fff;border:1px solid #c8c8c8;border-radius:3px;font-size:9.23px;color:#555;line-height:23.5px;padding-left:6px">---Select---<svg style="position:absolute;right:6px;top:9px" width="7" height="4" viewBox="0 0 7 4"><path d="M0 0h7L3.5 4z" fill="#777"/></svg></div>
<div class="a" style="left:222.5px;top:380px;width:967px;height:27px;background:#ececec;border-top:1px solid #dfdfdf;border-bottom:2px solid #d6d6d6"></div>
<div class="a" style="left:270.8px;top:381px;width:1px;height:25px;background:#dadada"></div>
<div class="a" style="left:492.3px;top:381px;width:1px;height:25px;background:#dadada"></div>
<div class="a" style="left:634.0px;top:381px;width:1px;height:25px;background:#dadada"></div>
<div class="a" style="left:758.3px;top:381px;width:1px;height:25px;background:#dadada"></div>
<div class="a" style="left:942.7px;top:381px;width:1px;height:25px;background:#dadada"></div>
<div class="a" style="left:1092.7px;top:381px;width:1px;height:25px;background:#dadada"></div>
<div class="th" style="left:222.2px;width:48.6px;top:387.8px;text-align:center;font-size:8.9px;letter-spacing:0.15px">Sl#</div>
<div class="th" style="left:270.8px;width:221.5px;top:387.8px;text-align:center;font-size:8.9px;letter-spacing:0.15px">Company</div>
<div class="th" style="left:492.3px;width:141.7px;top:387.8px;text-align:center;font-size:8.9px;letter-spacing:0.15px">Invoice Date</div>
<div class="th" style="left:634.0px;width:124.3px;top:387.8px;text-align:center;font-size:8.9px;letter-spacing:0.15px">Invoice No</div>
<div class="th" style="left:758.3px;width:184.4px;top:387.8px;text-align:center;font-size:8.9px;letter-spacing:0.15px">Invoice Total</div>
<div class="th" style="left:942.7px;width:150.0px;top:387.8px;text-align:center;font-size:8.9px;letter-spacing:0.15px">Matured Date</div>
<div class="th" style="left:1092.7px;width:96.6px;top:387.8px;text-align:center;font-size:8.9px;letter-spacing:0.15px">Total crossed days</div>
<div class="a" style="left:1092.7px;top:407px;width:96.6px;height:500px;background:#ffff00"></div>
<div class="a" style="left:222.5px;top:433.17px;width:967px;height:1px;background:#e4e4e4"></div>
<div class="td tdc" style="left:222.2px;width:48.6px;top:414.50px">1</div>
<div class="td" style="left:277.7px;top:414.50px">360 Degree Vintage BD</div>
<div class="td tdc" style="left:492.3px;width:141.7px;top:414.50px">02-08-2022</div>
<div class="td tdc" style="left:634.0px;width:124.3px;top:414.50px">15037</div>
<div class="td" style="left:763.7px;top:414.50px">450887.36000000</div>
<div class="td tdc" style="left:942.7px;width:150.0px;top:414.50px">02-08-2022</div>
<div class="td tdc" style="left:1092.7px;width:96.6px;top:414.50px;color:#4a4a20">28</div>
<div class="a" style="left:222.5px;top:459.83px;width:967px;height:1px;background:#e4e4e4"></div>
<div class="td tdc" style="left:222.2px;width:48.6px;top:441.17px">2</div>
<div class="td" style="left:277.7px;top:441.17px">Afil Paper Mills Ltd.</div>
<div class="td tdc" style="left:492.3px;width:141.7px;top:441.17px">23-07-2022</div>
<div class="td tdc" style="left:634.0px;width:124.3px;top:441.17px">15036</div>
<div class="td" style="left:763.7px;top:441.17px">1000000.00000000</div>
<div class="td tdc" style="left:942.7px;width:150.0px;top:441.17px">23-07-2022</div>
<div class="td tdc" style="left:1092.7px;width:96.6px;top:441.17px;color:#4a4a20">38</div>
<div class="a" style="left:222.5px;top:486.00px;width:967px;height:2px;background:#e2e2e2"></div>
<div class="td tdc" style="left:222.2px;width:48.6px;top:467.83px">3</div>
<div class="td" style="left:277.7px;top:467.83px">Friends Chemicals</div>
<div class="td tdc" style="left:492.3px;width:141.7px;top:467.83px">26-10-2019</div>
<div class="td tdc" style="left:634.0px;width:124.3px;top:467.83px">13453</div>
<div class="td" style="left:763.7px;top:467.83px">172876.00000000</div>
<div class="td tdc" style="left:942.7px;width:150.0px;top:467.83px">26-10-2019</div>
<div class="td tdc" style="left:1092.7px;width:96.6px;top:467.83px;color:#4a4a20">1039</div>
<div class="a" style="left:222.5px;top:513.17px;width:967px;height:1px;background:#e4e4e4"></div>
<div class="td tdc" style="left:222.2px;width:48.6px;top:494.50px">4</div>
<div class="td" style="left:277.7px;top:494.50px">Friends Chemicals</div>
<div class="td tdc" style="left:492.3px;width:141.7px;top:494.50px">26-10-2019</div>
<div class="td tdc" style="left:634.0px;width:124.3px;top:494.50px">13454</div>
<div class="td" style="left:763.7px;top:494.50px">336762.00000000</div>
<div class="td tdc" style="left:942.7px;width:150.0px;top:494.50px">26-10-2019</div>
<div class="td tdc" style="left:1092.7px;width:96.6px;top:494.50px;color:#4a4a20">1039</div>
<div class="a" style="left:222.5px;top:539.83px;width:967px;height:1px;background:#e4e4e4"></div>
<div class="td tdc" style="left:222.2px;width:48.6px;top:521.17px">5</div>
<div class="td" style="left:277.7px;top:521.17px">Friends Chemicals</div>
<div class="td tdc" style="left:492.3px;width:141.7px;top:521.17px">15-07-2019</div>
<div class="td tdc" style="left:634.0px;width:124.3px;top:521.17px">12512</div>
<div class="td" style="left:763.7px;top:521.17px">336136.00000000</div>
<div class="td tdc" style="left:942.7px;width:150.0px;top:521.17px">15-07-2019</div>
<div class="td tdc" style="left:1092.7px;width:96.6px;top:521.17px;color:#4a4a20">1142</div>
<div class="a" style="left:222.5px;top:566.00px;width:967px;height:2px;background:#e2e2e2"></div>
<div class="td tdc" style="left:222.2px;width:48.6px;top:547.84px">6</div>
<div class="td" style="left:277.7px;top:547.84px">Friends Chemicals</div>
<div class="td tdc" style="left:492.3px;width:141.7px;top:547.84px">29-10-2019</div>
<div class="td tdc" style="left:634.0px;width:124.3px;top:547.84px">13497</div>
<div class="td" style="left:763.7px;top:547.84px">393192.00000000</div>
<div class="td tdc" style="left:942.7px;width:150.0px;top:547.84px">29-10-2019</div>
<div class="td tdc" style="left:1092.7px;width:96.6px;top:547.84px;color:#4a4a20">1036</div>
<div class="a" style="left:222.5px;top:593.17px;width:967px;height:1px;background:#e4e4e4"></div>
<div class="td tdc" style="left:222.2px;width:48.6px;top:574.50px">7</div>
<div class="td" style="left:277.7px;top:574.50px">Friends Chemicals</div>
<div class="td tdc" style="left:492.3px;width:141.7px;top:574.50px">29-10-2019</div>
<div class="td tdc" style="left:634.0px;width:124.3px;top:574.50px">13498</div>
<div class="td" style="left:763.7px;top:574.50px">22356.00000000</div>
<div class="td tdc" style="left:942.7px;width:150.0px;top:574.50px">29-10-2019</div>
<div class="td tdc" style="left:1092.7px;width:96.6px;top:574.50px;color:#4a4a20">1036</div>
<div class="a" style="left:222.5px;top:619.83px;width:967px;height:1px;background:#e4e4e4"></div>
<div class="td tdc" style="left:222.2px;width:48.6px;top:601.17px">8</div>
<div class="td" style="left:277.7px;top:601.17px">Friends Chemicals</div>
<div class="td tdc" style="left:492.3px;width:141.7px;top:601.17px">06-11-2019</div>
<div class="td tdc" style="left:634.0px;width:124.3px;top:601.17px">13574</div>
<div class="td" style="left:763.7px;top:601.17px">134136.00000000</div>
<div class="td tdc" style="left:942.7px;width:150.0px;top:601.17px">06-11-2019</div>
<div class="td tdc" style="left:1092.7px;width:96.6px;top:601.17px;color:#4a4a20">1028</div>
<div class="a" style="left:222.5px;top:646.00px;width:967px;height:2px;background:#e2e2e2"></div>
<div class="td tdc" style="left:222.2px;width:48.6px;top:627.84px">9</div>
<div class="td" style="left:277.7px;top:627.84px">Friends Chemicals</div>
<div class="td tdc" style="left:492.3px;width:141.7px;top:627.84px">06-11-2019</div>
<div class="td tdc" style="left:634.0px;width:124.3px;top:627.84px">13575</div>
<div class="td" style="left:763.7px;top:627.84px">229276.00000000</div>
<div class="td tdc" style="left:942.7px;width:150.0px;top:627.84px">06-11-2019</div>
<div class="td tdc" style="left:1092.7px;width:96.6px;top:627.84px;color:#4a4a20">1028</div>
<div class="a" style="left:222.5px;top:673.17px;width:967px;height:1px;background:#e4e4e4"></div>
<div class="td tdc" style="left:222.2px;width:48.6px;top:654.50px">10</div>
<div class="td" style="left:277.7px;top:654.50px">Friends Chemicals</div>
<div class="td tdc" style="left:492.3px;width:141.7px;top:654.50px">11-11-2019</div>
<div class="td tdc" style="left:634.0px;width:124.3px;top:654.50px">13621</div>
<div class="td" style="left:763.7px;top:654.50px">202000.00000000</div>
<div class="td tdc" style="left:942.7px;width:150.0px;top:654.50px">11-11-2019</div>
<div class="td tdc" style="left:1092.7px;width:96.6px;top:654.50px;color:#4a4a20">1023</div>
<div class="a" style="left:222.5px;top:699.83px;width:967px;height:1px;background:#e4e4e4"></div>
<div class="td tdc" style="left:222.2px;width:48.6px;top:681.17px">11</div>
<div class="td" style="left:277.7px;top:681.17px">Friends Chemicals</div>
<div class="td tdc" style="left:492.3px;width:141.7px;top:681.17px">11-11-2019</div>
<div class="td tdc" style="left:634.0px;width:124.3px;top:681.17px">13622</div>
<div class="td" style="left:763.7px;top:681.17px">336806.00000000</div>
<div class="td tdc" style="left:942.7px;width:150.0px;top:681.17px">11-11-2019</div>
<div class="td tdc" style="left:1092.7px;width:96.6px;top:681.17px;color:#4a4a20">1023</div>
<div class="a" style="left:222.5px;top:726.00px;width:967px;height:2px;background:#e2e2e2"></div>
<div class="td tdc" style="left:222.2px;width:48.6px;top:707.84px">12</div>
<div class="td" style="left:277.7px;top:707.84px">Friends Chemicals</div>
<div class="td tdc" style="left:492.3px;width:141.7px;top:707.84px">15-11-2019</div>
<div class="td tdc" style="left:634.0px;width:124.3px;top:707.84px">13655</div>
<div class="td" style="left:763.7px;top:707.84px">383256.00000000</div>
<div class="td tdc" style="left:942.7px;width:150.0px;top:707.84px">15-11-2019</div>
<div class="td tdc" style="left:1092.7px;width:96.6px;top:707.84px;color:#4a4a20">1019</div>
<div class="a" style="left:222.5px;top:753.17px;width:967px;height:1px;background:#e4e4e4"></div>
<div class="td tdc" style="left:222.2px;width:48.6px;top:734.50px">13</div>
<div class="td" style="left:277.7px;top:734.50px">Friends Chemicals</div>
<div class="td tdc" style="left:492.3px;width:141.7px;top:734.50px">15-11-2019</div>
<div class="td tdc" style="left:634.0px;width:124.3px;top:734.50px">13656</div>
<div class="td" style="left:763.7px;top:734.50px">20976.00000000</div>
<div class="td tdc" style="left:942.7px;width:150.0px;top:734.50px">15-11-2019</div>
<div class="td tdc" style="left:1092.7px;width:96.6px;top:734.50px;color:#4a4a20">1019</div>
<div class="a" style="left:222.5px;top:779.83px;width:967px;height:1px;background:#e4e4e4"></div>
<div class="td tdc" style="left:222.2px;width:48.6px;top:761.17px">14</div>
<div class="td" style="left:277.7px;top:761.17px">Friends Chemicals</div>
<div class="td tdc" style="left:492.3px;width:141.7px;top:761.17px">17-11-2019</div>
<div class="td tdc" style="left:634.0px;width:124.3px;top:761.17px">13683</div>
<div class="td" style="left:763.7px;top:761.17px">287716.00000000</div>
<div class="td tdc" style="left:942.7px;width:150.0px;top:761.17px">17-11-2019</div>
<div class="td tdc" style="left:1092.7px;width:96.6px;top:761.17px;color:#4a4a20">1017</div>
<div class="a" style="left:222.5px;top:806.00px;width:967px;height:2px;background:#e2e2e2"></div>
<div class="td tdc" style="left:222.2px;width:48.6px;top:787.84px">15</div>
<div class="td" style="left:277.7px;top:787.84px">Friends Chemicals</div>
<div class="td tdc" style="left:492.3px;width:141.7px;top:787.84px">17-11-2019</div>
<div class="td tdc" style="left:634.0px;width:124.3px;top:787.84px">13684</div>
<div class="td" style="left:763.7px;top:787.84px">160260.00000000</div>
<div class="td tdc" style="left:942.7px;width:150.0px;top:787.84px">17-11-2019</div>
<div class="td tdc" style="left:1092.7px;width:96.6px;top:787.84px;color:#4a4a20">1017</div>
<div class="a" style="left:222.5px;top:833.17px;width:967px;height:1px;background:#e4e4e4"></div>
<div class="td tdc" style="left:222.2px;width:48.6px;top:814.50px">16</div>
<div class="td" style="left:277.7px;top:814.50px">Friends Chemicals</div>
<div class="td tdc" style="left:492.3px;width:141.7px;top:814.50px">19-11-2019</div>
<div class="td tdc" style="left:634.0px;width:124.3px;top:814.50px">13704</div>
<div class="td" style="left:763.7px;top:814.50px">193503.00000000</div>
<div class="td tdc" style="left:942.7px;width:150.0px;top:814.50px">19-11-2019</div>
<div class="td tdc" style="left:1092.7px;width:96.6px;top:814.50px;color:#4a4a20">1015</div>
<div class="a" style="left:222.5px;top:859.83px;width:967px;height:1px;background:#e4e4e4"></div>
<div class="td tdc" style="left:222.2px;width:48.6px;top:841.17px">17</div>
<div class="td" style="left:277.7px;top:841.17px">Friends Chemicals</div>
<div class="td tdc" style="left:492.3px;width:141.7px;top:841.17px">19-11-2019</div>
<div class="td tdc" style="left:634.0px;width:124.3px;top:841.17px">13705</div>
<div class="td" style="left:763.7px;top:841.17px">242274.00000000</div>
<div class="td tdc" style="left:942.7px;width:150.0px;top:841.17px">19-11-2019</div>
<div class="td tdc" style="left:1092.7px;width:96.6px;top:841.17px;color:#4a4a20">1015</div>
<div class="a" style="left:222.5px;top:886.00px;width:967px;height:2px;background:#e2e2e2"></div>
<div class="td tdc" style="left:222.2px;width:48.6px;top:867.84px">18</div>
<div class="td" style="left:277.7px;top:867.84px">Friends Chemicals</div>
<div class="td tdc" style="left:492.3px;width:141.7px;top:867.84px">23-11-2019</div>
<div class="td tdc" style="left:634.0px;width:124.3px;top:867.84px">13737</div>
<div class="td" style="left:763.7px;top:867.84px">396742.00000000</div>
<div class="td tdc" style="left:942.7px;width:150.0px;top:867.84px">23-11-2019</div>
<div class="td tdc" style="left:1092.7px;width:96.6px;top:867.84px;color:#4a4a20">1011</div>
<div class="a" style="left:222.5px;top:913.17px;width:967px;height:1px;background:#e4e4e4"></div>
<div class="td tdc" style="left:222.2px;width:48.6px;top:894.51px">19</div>
<div class="td" style="left:277.7px;top:894.51px">Friends Chemicals</div>
<div class="td tdc" style="left:492.3px;width:141.7px;top:894.51px">30-11-2019</div>
<div class="td tdc" style="left:634.0px;width:124.3px;top:894.51px">13789</div>
<div class="td" style="left:763.7px;top:894.51px">299721.00000000</div>
<div class="td tdc" style="left:942.7px;width:150.0px;top:894.51px">30-11-2019</div>
<div class="td tdc" style="left:1092.7px;width:96.6px;top:894.51px;color:#4a4a20">1004</div>
<div class="a" style="left:1088px;top:578.5px;font-size:9.15px;white-space:nowrap;color:#444">&copy;2022 <span style="color:#3a86c2">Extreme Solutions.</span></div>
</body></html>
